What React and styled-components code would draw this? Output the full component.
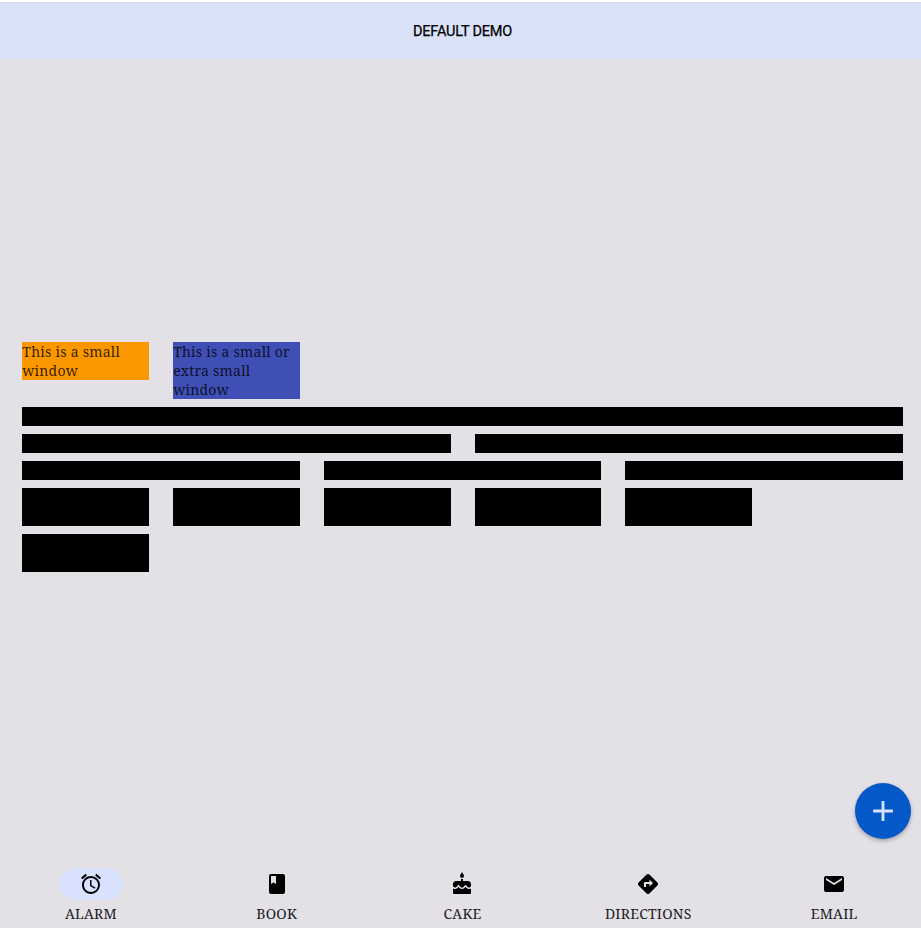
import React from 'react';
import styled, { createGlobalStyle } from 'styled-components';
import { MdAlarm, MdBook, MdCake, MdDirections, MdEmail, MdAdd } from 'react-icons/md';

const GlobalStyle = createGlobalStyle`
  body { margin: 0; background: #fff; overflow: hidden; }
  * { box-sizing: border-box; }
`;

const Screen = styled.div`
  position: relative;
  display: flex;
  flex-direction: column;
  height: 928px;
  padding-top: 2px;
  overflow: hidden;
  background: linear-gradient(#fff 2px, #e4e1e6 2px);
  color: #1b1b1f;
  font-family: 'Noto Serif', 'Droid Serif', 'DejaVu Serif Condensed', serif;
`;

const Header = styled.header`
  display: flex;
  align-items: center;
  justify-content: center;
  height: 57px;
  padding: 1px 0 0 4px;
  border-top: 1px solid #d8dbe2;
  background: #dae2f9;
  color: #000;
  font: 400 14.5px/21px Roboto, sans-serif;
  letter-spacing: -0.22px;
  -webkit-text-stroke: 0.25px #000;
`;

const Main = styled.main`
  flex: 1;
  display: flex;
  flex-direction: column;
  gap: 8px;
  padding: 283px 18px 0 22px;
`;

const Row = styled.div`
  display: grid;
  grid-template-columns: repeat(${p => p.$columns}, minmax(0, 1fr));
  column-gap: 24px;
  align-items: start;
`;

const Cell = styled.div`
  min-height: ${p => p.$lines * 19}px;
  padding-left: 0.3px;
  background: ${p => p.$color || '#000'};
  color: rgba(0, 0, 0, 0.8);
  font-size: 14px;
  line-height: 19px;
  letter-spacing: 0.25px;
`;

const Nav = styled.nav`
  display: grid;
  grid-template-columns: repeat(5, 1fr);
  height: 68px;
  margin: 0 -6px 0 -2px;
`;

const NavItem = styled.div`
  display: flex;
  flex-direction: column;
  align-items: center;
  padding-top: 8px;
  font-size: 14px;
  line-height: 19px;
  letter-spacing: 0.25px;
`;

const Indicator = styled.span`
  display: grid;
  place-items: center;
  width: 64px;
  height: 32px;
  margin-bottom: 4px;
  border-radius: 16px;
  background: ${p => (p.$active ? '#d8e2ff' : 'transparent')};
  color: #000;
`;

const Fab = styled.button`
  position: absolute;
  right: 10px;
  bottom: 89px;
  display: grid;
  place-items: center;
  width: 56px;
  height: 56px;
  padding: 0;
  border: 0;
  border-radius: 50%;
  background: #0558c7;
  color: #d8e2ff;
  box-shadow: 0 2px 4px rgba(0, 0, 0, 0.28);
`;

const items = [
  ['ALARM', MdAlarm],
  ['BOOK', MdBook],
  ['CAKE', MdCake],
  ['DIRECTIONS', MdDirections],
  ['EMAIL', MdEmail],
];

const blocks = [
  { columns: 1, count: 1, lines: 1 },
  { columns: 2, count: 2, lines: 1 },
  { columns: 3, count: 3, lines: 1 },
  { columns: 6, count: 5, lines: 2 },
  { columns: 6, count: 1, lines: 2 },
];

export default function App() {
  return (
    <>
      <GlobalStyle />
      <Screen>
        <Header>DEFAULT DEMO</Header>
        <Main>
          <Row $columns={6}>
            <Cell $color="#fb9800" $lines={2}>This is a small window</Cell>
            <Cell $color="#3f4fb6" $lines={3}>This is a small or extra small window</Cell>
          </Row>
          {blocks.map((row, i) => (
            <Row key={i} $columns={row.columns}>
              {Array.from({ length: row.count }, (_, n) => (
                <Cell key={n} $lines={row.lines} />
              ))}
            </Row>
          ))}
        </Main>
        <Nav>
          {items.map(([label, Icon], i) => (
            <NavItem key={label}>
              <Indicator $active={i === 0}><Icon size={24} /></Indicator>
              {label}
            </NavItem>
          ))}
        </Nav>
        <Fab aria-label="Add"><MdAdd size={34} /></Fab>
      </Screen>
    </>
  );
}
